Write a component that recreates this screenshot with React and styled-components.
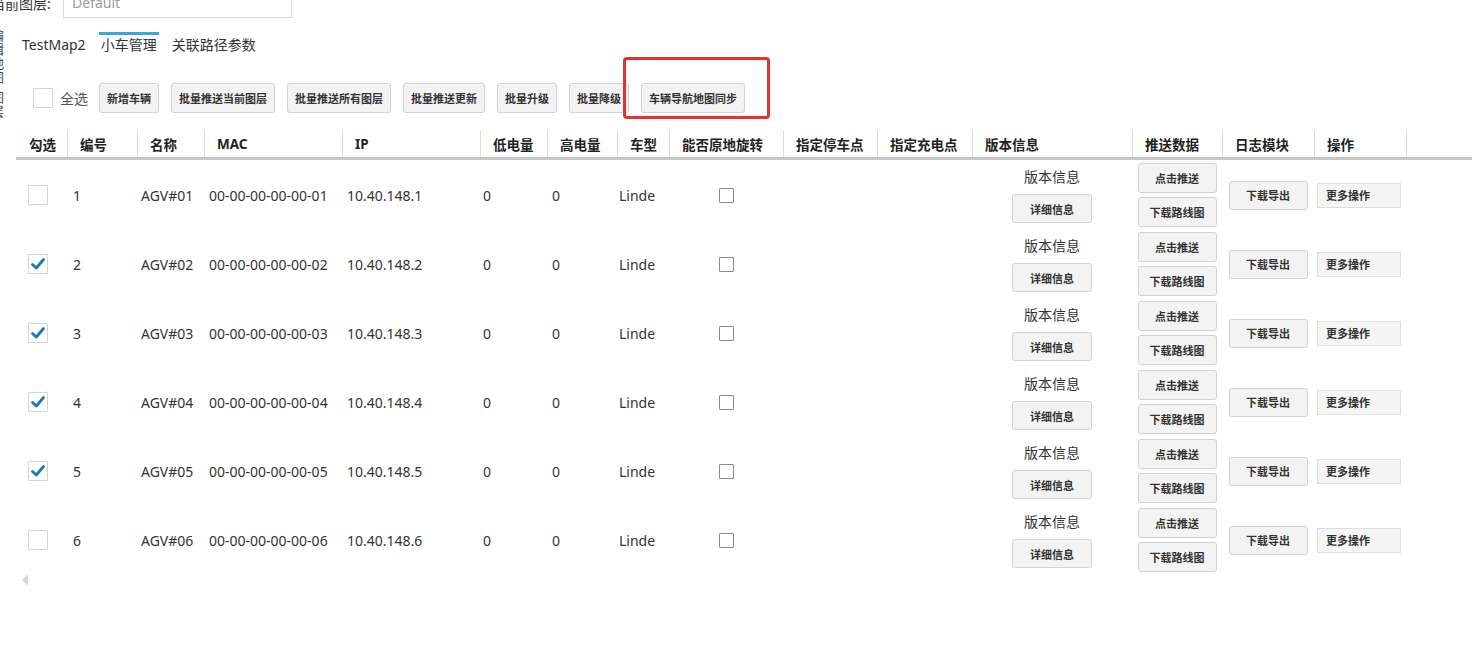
import React from 'react'
import styled, { createGlobalStyle } from 'styled-components'

const GlobalStyle = createGlobalStyle`
  html, body {
    margin: 0;
    padding: 0;
    background: #fff;
  }
  body {
    font-family: "Noto Sans", "Noto Sans CJK SC", sans-serif;
    color: #333;
  }
`

const Page = styled.div`
  position: relative;
  width: 1472px;
  height: 665px;
  overflow: hidden;
  background: #fff;
`

const TopBar = styled.div`
  display: flex;
  align-items: center;
  height: 30px;
  margin-top: -12px;
  margin-left: -9px;
`

const LayerLabel = styled.div`
  width: 72px;
  font-size: 14px;
  color: #333;
  white-space: nowrap;
`

const LayerInput = styled.div`
  box-sizing: border-box;
  width: 229px;
  height: 30px;
  border: 1px solid #dcdcdc;
  padding-left: 8px;
  font-size: 14px;
  line-height: 28px;
  color: #9a9a9a;
`

const Body = styled.div`
  display: flex;
`

const Sidebar = styled.div`
  width: 8px;
  flex: none;
  overflow: hidden;
  padding-top: 10px;
`

const SideGroup = styled.div`
  margin-left: -9px;
  width: 13px;
  font-size: 13px;
  line-height: 14px;
  color: #444;
  margin-bottom: 6px;
`

const Main = styled.div`
  flex: 1;
  min-width: 0;
`

const Tabs = styled.div`
  display: flex;
  gap: 11px;
  margin-top: 14px;
  padding-left: 12px;
`

const Tab = styled.div`
  border-top: 3px solid ${p => (p.$active ? '#3aa7dc' : 'transparent')};
  padding: 0 2px;
  font-size: 14px;
  line-height: 20px;
  color: #333;
`

const Toolbar = styled.div`
  display: flex;
  align-items: center;
  gap: 12px;
  margin-top: 28px;
  padding-left: 25px;
  height: 30px;
`

const SelectAll = styled.label`
  display: flex;
  align-items: center;
  gap: 7px;
  margin-right: -1px;
  font-size: 14px;
  color: #555;
`

const Box = styled.span`
  box-sizing: border-box;
  display: inline-flex;
  align-items: center;
  justify-content: center;
  width: ${p => p.$size || 20}px;
  height: ${p => p.$size || 20}px;
  border: 1px solid ${p => p.$border || '#d4d4d4'};
  border-radius: 1px;
  background: #fff;
`

const Button = styled.button`
  box-sizing: border-box;
  height: ${p => p.$h || 30}px;
  min-width: ${p => p.$w || 0}px;
  padding: 0 7px;
  border: 1px solid #d2d2d2;
  border-radius: 3px;
  background: #f3f3f3;
  font-family: "Noto Sans CJK SC", "Noto Sans", sans-serif;
  font-size: 11px;
  font-weight: 700;
  color: #333;
  white-space: nowrap;
`

const MoreButton = styled.div`
  box-sizing: border-box;
  width: 84px;
  height: 25px;
  padding-left: 8px;
  border: 1px solid #dedede;
  background: #f5f5f5;
  font-family: "Noto Sans CJK SC", "Noto Sans", sans-serif;
  font-size: 11px;
  font-weight: 700;
  line-height: 23px;
  color: #333;
`

const Table = styled.div`
  margin-top: 17px;
  margin-left: 8px;
`

const COLS = '51px 70px 67px 138px 138px 67px 70px 52px 114px 94px 95px 160px 90px 92px 92px 1fr'

const HeadRow = styled.div`
  display: grid;
  grid-template-columns: ${COLS};
  height: 27px;
  border-bottom: 3px solid #c8c8c8;
`

const HeadCell = styled.div`
  display: flex;
  align-items: center;
  padding-left: 12px;
  padding-top: 1px;
  border-left: 1px solid ${p => (p.$first ? 'transparent' : '#dcdcdc')};
  font-family: "Noto Sans", "Noto Sans CJK SC", sans-serif;
  font-size: 13.5px;
  font-weight: 700;
  color: #222;
  white-space: nowrap;
`

const Row = styled.div`
  display: grid;
  grid-template-columns: ${COLS};
  height: 69px;
`

const Cell = styled.div`
  display: flex;
  flex-direction: ${p => (p.$stack ? 'column' : 'row')};
  align-items: center;
  justify-content: ${p => (p.$center ? 'center' : 'flex-start')};
  gap: ${p => p.$gap || 0}px;
  padding-left: ${p => (p.$pad !== undefined ? p.$pad : 5)}px;
  padding-top: 1px;
  font-size: 14px;
  color: #333;
  white-space: nowrap;
`

const VersionText = styled.div`
  font-size: 14px;
  line-height: 20px;
  color: #333;
`

const ScrollArrow = styled.div`
  width: 0;
  height: 0;
  margin-left: 14px;
  border-top: 6px solid transparent;
  border-bottom: 6px solid transparent;
  border-right: 6px solid #d6d6d6;
`

const Highlight = styled.div`
  position: absolute;
  left: 623px;
  top: 57px;
  width: 147px;
  height: 62px;
  box-sizing: border-box;
  border: 3px solid #e6322b;
  border-radius: 4px;
  pointer-events: none;
`

const Check = () => (
  <svg width="16" height="16" viewBox="0 0 16 16">
    <path d="M2.5 8.5 L6.3 12 L13.5 3.5" fill="none" stroke="#1f78b4" strokeWidth="2.8" strokeLinecap="round" strokeLinejoin="round" />
  </svg>
)

const headers = ['勾选', '编号', '名称', 'MAC', 'IP', '低电量', '高电量', '车型', '能否原地旋转', '指定停车点', '指定充电点', '版本信息', '推送数据', '日志模块', '操作', '']

const toolButtons = ['新增车辆', '批量推送当前图层', '批量推送所有图层', '批量推送更新', '批量升级', '批量降级', '车辆导航地图同步']

const cars = [1, 2, 3, 4, 5, 6].map(n => ({
  id: n,
  name: `AGV#0${n}`,
  mac: `00-00-00-00-00-0${n}`,
  ip: `10.40.148.${n}`,
  checked: n > 1 && n < 6,
}))

const App = () => (
  <Page>
    <GlobalStyle />
    <TopBar>
      <LayerLabel>当前图层:</LayerLabel>
      <LayerInput>Default</LayerInput>
    </TopBar>
    <Body>
      <Sidebar>
        <SideGroup>编辑地图</SideGroup>
        <SideGroup>图层</SideGroup>
      </Sidebar>
      <Main>
        <Tabs>
          <Tab>TestMap2</Tab>
          <Tab $active>小车管理</Tab>
          <Tab>关联路径参数</Tab>
        </Tabs>
        <Toolbar>
          <SelectAll>
            <Box />
            全选
          </SelectAll>
          {toolButtons.map(b => <Button key={b}>{b}</Button>)}
        </Toolbar>
        <Table>
          <HeadRow>
            {headers.map((h, i) => <HeadCell key={i} $first={i === 0}>{h}</HeadCell>)}
          </HeadRow>
          {cars.map(car => (
            <Row key={car.id}>
              <Cell $pad={12}>
                <Box>{car.checked && <Check />}</Box>
              </Cell>
              <Cell $pad={6}>{car.id}</Cell>
              <Cell $pad={4}>{car.name}</Cell>
              <Cell>{car.mac}</Cell>
              <Cell>{car.ip}</Cell>
              <Cell $pad={3}>0</Cell>
              <Cell $pad={5}>0</Cell>
              <Cell $pad={2}>Linde</Cell>
              <Cell $center $pad={0}>
                <Box $size={15} $border="#8a8a8a" />
              </Cell>
              <Cell />
              <Cell />
              <Cell $stack $center $pad={0} $gap={7}>
                <VersionText>版本信息</VersionText>
                <Button $w={80} $h={29}>详细信息</Button>
              </Cell>
              <Cell $stack $center $pad={0} $gap={4}>
                <Button $w={79}>点击推送</Button>
                <Button $w={79}>下载路线图</Button>
              </Cell>
              <Cell $center $pad={0}>
                <Button $w={79} $h={29}>下载导出</Button>
              </Cell>
              <Cell $pad={3}>
                <MoreButton>更多操作</MoreButton>
              </Cell>
              <Cell />
            </Row>
          ))}
        </Table>
        <ScrollArrow />
      </Main>
    </Body>
    <Highlight />
  </Page>
)

export default App
